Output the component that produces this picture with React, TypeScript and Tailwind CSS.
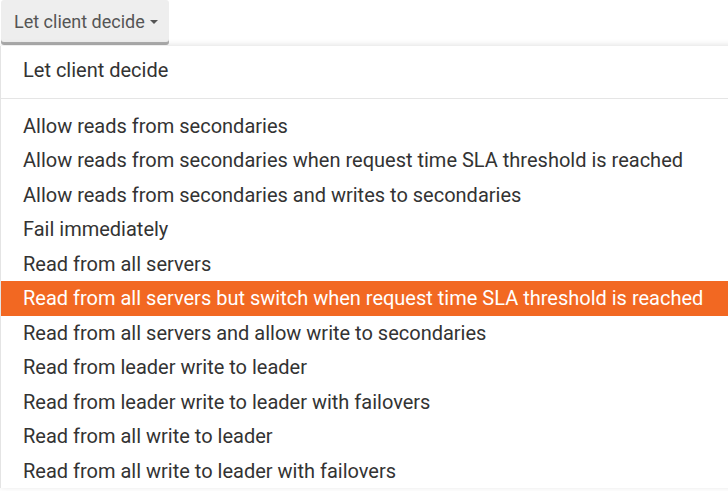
const items = [
  'Allow reads from secondaries',
  'Allow reads from secondaries when request time SLA threshold is reached',
  'Allow reads from secondaries and writes to secondaries',
  'Fail immediately',
  'Read from all servers',
  'Read from all servers but switch when request time SLA threshold is reached',
  'Read from all servers and allow write to secondaries',
  'Read from leader write to leader',
  'Read from leader write to leader with failovers',
  'Read from all write to leader',
  'Read from all write to leader with failovers',
];

const ACTIVE = 'Read from all servers but switch when request time SLA threshold is reached';

export default function App() {
  return (
    <div className="h-[491px] w-[728px] overflow-hidden bg-white font-['Roboto',sans-serif]">
      <button className="ml-[1px] flex h-[42px] w-[168px] items-center gap-[5px] rounded-[3px] bg-[#eeeeee] pl-[13px] text-[18px] text-[#555555] shadow-[0_3px_0_#adadad]">
        Let client decide
        <span className="mt-[1px] h-0 w-0 border-x-[4px] border-t-[4px] border-x-transparent border-t-[#555555]" />
      </button>
      <ul className="mt-[4px] w-[760px] border-l border-[#e4e4e4] bg-white pt-[7px] text-[20px] text-[#333333] shadow-[0_-1px_6px_rgba(0,0,0,0.12)]">
        <li className="flex h-[34.5px] items-center pl-[22px]">Let client decide</li>
        <li className="my-[10px] h-px bg-[#e5e5e5]" />
        {items.map((item) => (
          <li
            key={item}
            className={
              item === ACTIVE
                ? 'flex h-[34.5px] items-center bg-[#f26822] pl-[22px] text-white'
                : 'flex h-[34.5px] items-center pl-[22px]'
            }
          >
            {item}
          </li>
        ))}
      </ul>
    </div>
  );
}
